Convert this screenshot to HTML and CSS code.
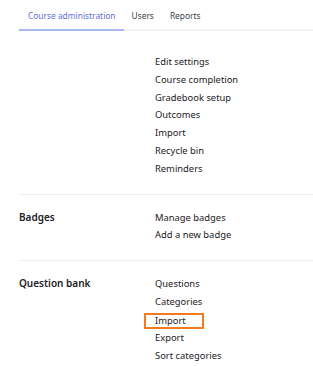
FILE: index.html
```html
<!DOCTYPE html>
<html lang="en">
<head>
    <meta charset="UTF-8">
    <meta name="viewport" content="width=device-width, initial-scale=1.0">
    <title>Course administration</title>
    <link rel="stylesheet" href="styles.css">
</head>
<body>
    <div class="page">
        <ul class="tabs">
            <li class="tab active">Course administration</li>
            <li class="tab">Users</li>
            <li class="tab">Reports</li>
        </ul>

        <div class="section first">
            <div class="section-title"></div>
            <ul class="links">
                <li>Edit settings</li>
                <li>Course completion</li>
                <li>Gradebook setup</li>
                <li>Outcomes</li>
                <li>Import</li>
                <li>Recycle bin</li>
                <li>Reminders</li>
            </ul>
        </div>

        <div class="section">
            <div class="section-title">Badges</div>
            <ul class="links">
                <li>Manage badges</li>
                <li>Add a new badge</li>
            </ul>
        </div>

        <div class="section last">
            <div class="section-title">Question bank</div>
            <ul class="links">
                <li>Questions</li>
                <li>Categories</li>
                <li><span class="highlight">Import</span></li>
                <li>Export</li>
                <li>Sort categories</li>
            </ul>
        </div>
    </div>
</body>
</html>
```

FILE: styles.css
```css
body {
    margin: 0;
    background: #fff;
    color: #1d2125;
    font-family: "Noto Sans", "DejaVu Sans", sans-serif;
    font-size: 9.4px;
}
ul {
    list-style: none;
    margin: 0;
    padding: 0;
}
.page {
    padding-left: 19px;
}
.tabs {
    display: flex;
    height: 29px;
    border-bottom: 2px solid #f3f3f4;
}
.tab {
    padding: 0 8px 0 8px;
    font-size: 8.4px;
    line-height: 32px;
    color: #3a3f44;
}
.tab.active {
    padding: 0 8px 0 9px;
    color: #6170dc;
    border-bottom: 2px solid #a9b8ef;
    margin-bottom: -2px;
}
.section {
    display: grid;
    grid-template-columns: 136px 1fr;
    padding: 14px 0 16px;
    border-bottom: 1px solid #ededed;
}
.section.first {
    padding-top: 22px;
}
.section.last {
    border-bottom: none;
}
.section-title {
    font-size: 10px;
    font-weight: 600;
    line-height: 17.8px;
}
.links li {
    line-height: 17.8px;
}
.highlight {
    display: inline-block;
    box-sizing: border-box;
    width: 60px;
    height: 16px;
    margin-left: -11px;
    padding-left: 9px;
    line-height: 12px;
    vertical-align: -1px;
    border: 2px solid #f47a20;
}
```
